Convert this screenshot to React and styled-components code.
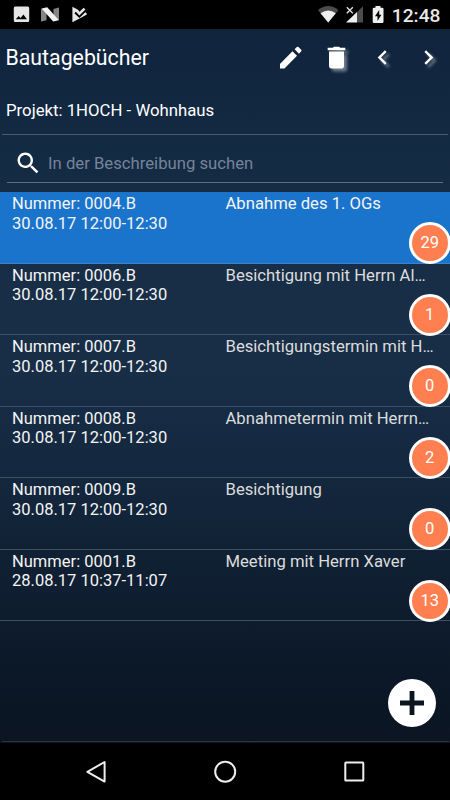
import React, { useState } from "react";
import styled, { createGlobalStyle } from "styled-components";

const entries = [
  { number: "0004.B", date: "30.08.17 12:00-12:30", text: "Abnahme des 1. OGs", count: 29 },
  { number: "0006.B", date: "30.08.17 12:00-12:30", text: "Besichtigung mit Herrn Al…", count: 1 },
  { number: "0007.B", date: "30.08.17 12:00-12:30", text: "Besichtigungstermin mit H…", count: 0 },
  { number: "0008.B", date: "30.08.17 12:00-12:30", text: "Abnahmetermin mit Herrn…", count: 2 },
  { number: "0009.B", date: "30.08.17 12:00-12:30", text: "Besichtigung", count: 0 },
  { number: "0001.B", date: "28.08.17 10:37-11:07", text: "Meeting mit Herrn Xaver", count: 13 },
];

const StatusIcons = () => (
  <>
    <svg width="80" height="18" viewBox="0 0 80 18">
      <path
        fill="#e6e6e6"
        fillRule="evenodd"
        d="M2.3 .5H14.7Q16.2 .5 16.2 2V14.5Q16.2 16 14.7 16H2.3Q.8 16 .8 14.5V2Q.8 .5 2.3 .5ZM2.8 13.2H14L10.4 8.6L7.6 12L5.7 9.9Z"
      />
      <path fill="#858585" d="M28 2.6L33.5 5V14.2L28 15.6ZM40.5 3L46 1.4V14L40.5 12Z" />
      <path fill="#f2f2f2" d="M28.6 2.4L34.2 1.2L46 14.2L40.2 15.6Z" />
      <path
        fill="#e6e6e6"
        d="M59.4 .8L65 3.8L66.6 5.8L70.6 1.8L72.4 3.4L66.4 9.4L62.8 5.8L61.4 7.2L66.4 12L72.2 6.2L73.8 7.4V8.4L68 11.8L59.4 16.2Z"
      />
    </svg>
    <svg width="66" height="18" viewBox="0 0 66 18">
      <path fill="#4c4c4c" d="M0 4.2Q10.2 -4 20.4 4.2L10.2 16.5Z" />
      <path fill="#efefef" d="M2.6 7.2Q10.2 1.6 17.8 7.2L10.2 16.5Z" />
      <path fill="#4c4c4c" d="M45 .2V16.5H39V6Z" />
      <path fill="#efefef" d="M39 6V16.5H28Z" />
      <path stroke="#dedede" strokeWidth="1.4" d="M28.8 1.2L34.8 7.2M34.8 1.2L28.8 7.2" />
      <path
        fill="#efefef"
        fillRule="evenodd"
        d="M57.5 0H62.5V1.7H64.2Q65.5 1.7 65.5 3V15.7Q65.5 17 64.2 17H56Q54.7 17 54.7 15.7V3Q54.7 1.7 56 1.7H57.5ZM61.2 4L57 10.2H59.5V15L63.4 8.8H61.2Z"
      />
    </svg>
  </>
);

const Icon = ({ size = 29, d }) => (
  <svg width={size} height={size} viewBox="0 0 24 24" fill="#fff">
    <path d={d} />
  </svg>
);

const App = () => {
  const [selected, setSelected] = useState(0);
  const [search, setSearch] = useState("");

  return (
    <>
      <GlobalStyle />
      <Screen>
        <StatusBar>
          <StatusIcons />
          <Clock>12:48</Clock>
        </StatusBar>
        <Content>
          <Header>
            <Title>Bautagebücher</Title>
            <IconButton>
              <Icon d="M3.3 17.3V21H7L17.4 10.6l-3.8-3.8L3.3 17.3zM20.9 6.9a1 1 0 0 0 0-1.3l-2.3-2.3a1 1 0 0 0-1.3 0l-1.9 1.9 3.6 3.6 1.9-1.9z" />
            </IconButton>
            <IconButton $shadow>
              <Icon d="M5.8 19.3c0 1 .8 1.8 1.8 1.8h8.8c1 0 1.8-.8 1.8-1.8V7H5.8v12.3zM19.3 4h-4.2l-1-1H9.9l-1 1H4.7v2h14.6V4z" />
            </IconButton>
            <IconButton $shadow>
              <Icon d="M15.41 7.41L14 6l-6 6 6 6 1.41-1.41L10.83 12z" />
            </IconButton>
            <IconButton $shadow>
              <Icon d="M10 6L8.59 7.41 13.17 12l-4.58 4.59L10 18l6-6z" />
            </IconButton>
          </Header>
          <Project>Projekt: 1HOCH - Wohnhaus</Project>
          <SearchBox>
            <Icon
              size={28.5}
              d="M15.5 14h-.79l-.28-.27C15.41 12.59 16 11.11 16 9.5 16 5.91 13.09 3 9.5 3S3 5.91 3 9.5 5.91 16 9.5 16c1.61 0 3.09-.59 4.23-1.57l.27.28v.79l5 4.99L20.49 19l-4.99-5zm-6 0C7.01 14 5 11.99 5 9.5S7.01 5 9.5 5 14 7.01 14 9.5 11.99 14 9.5 14z"
            />
            <SearchInput
              placeholder="In der Beschreibung suchen"
              value={search}
              onChange={(e) => setSearch(e.target.value)}
            />
          </SearchBox>
          <List>
            {entries.map((entry, i) => (
              <Row key={entry.number} $active={i === selected} onClick={() => setSelected(i)}>
                <Info>
                  Nummer: {entry.number}
                  <br />
                  {entry.date}
                </Info>
                <Description $active={i === selected}>{entry.text}</Description>
                <Badge>{entry.count}</Badge>
              </Row>
            ))}
          </List>
          <Footer>
            <AddButton>
              <svg width="24" height="24" viewBox="0 0 24 24">
                <path fill="#0b1421" d="M9.6 0h4.8v9.6H24v4.8h-9.6V24H9.6v-9.6H0V9.6h9.6z" />
              </svg>
            </AddButton>
          </Footer>
        </Content>
        <NavBar>
          <svg width="22" height="24" viewBox="0 0 22 24">
            <path d="M19.6 2V21.6L2.4 11.8Z" />
          </svg>
          <svg width="24" height="24" viewBox="0 0 24 24">
            <circle cx="12.2" cy="11.7" r="10" />
          </svg>
          <svg width="22" height="24" viewBox="0 0 22 24">
            <rect x="2.3" y="2.6" width="18" height="18" rx="0.6" />
          </svg>
        </NavBar>
      </Screen>
    </>
  );
};

export default App;

const GlobalStyle = createGlobalStyle`
  * {
    box-sizing: border-box;
  }
  body {
    margin: 0;
    background: #000;
    font-family: Roboto, "Liberation Sans", sans-serif;
  }
  svg {
    display: block;
    flex-shrink: 0;
  }
`;
const Screen = styled.div`
  display: flex;
  flex-direction: column;
  width: 450px;
  height: 800px;
  overflow: hidden;
  background: #000;
`;
const StatusBar = styled.div`
  display: flex;
  justify-content: space-between;
  height: 29px;
  padding: 6px 9.5px 0 13px;
  svg + svg {
    margin-left: auto;
  }
`;
const Clock = styled.span`
  margin-left: 7.5px;
  color: #e8e8e8;
  font-size: 19.2px;
  font-weight: 500;
  line-height: 19px;
`;
const Content = styled.div`
  display: flex;
  flex-direction: column;
  height: 714px;
  background: linear-gradient(
    #10243c 0%,
    #132a43 16%,
    #182e46 34%,
    #182e47 48%,
    #142940 60%,
    #102033 75%,
    #0c1929 88%,
    #0b1522 100%
  );
`;
const Header = styled.div`
  display: flex;
  align-items: center;
  gap: 17px;
  height: 56px;
  padding: 0 7.5px 0 5.5px;
`;
const Title = styled.h1`
  flex: 1;
  margin: 0;
  color: #fff;
  font-size: 21.3px;
  font-weight: 400;
`;
const IconButton = styled.button`
  padding: 0;
  border: 0;
  background: none;
  filter: ${(p) => (p.$shadow ? "drop-shadow(3px 3px 1.5px rgba(255, 255, 255, 0.4))" : "none")};
`;
const Project = styled.div`
  height: 50px;
  margin: 0 2px;
  padding-left: 4px;
  border-bottom: 1px solid #4b5b69;
  color: #fff;
  font-size: 16.75px;
  line-height: 50px;
`;
const SearchBox = styled.div`
  display: flex;
  align-items: center;
  height: 48px;
  margin: 0 7px 9px;
  padding: 9px 0 0 7px;
  border-bottom: 1px solid #5f6f7e;
`;
const SearchInput = styled.input`
  flex: 1;
  margin-left: 5.5px;
  padding: 0;
  border: 0;
  outline: 0;
  background: none;
  color: #fff;
  font: 16.7px Roboto, "Liberation Sans", sans-serif;
  &::placeholder {
    color: #75849a;
  }
`;
const List = styled.div`
  flex: 1;
`;
const Row = styled.div`
  display: flex;
  position: relative;
  height: 71.5px;
  padding: 2px 0 0 12px;
  border-bottom: 1px solid ${(p) => (p.$active ? "#3a82cb" : "#3d5063")};
  background: ${(p) => (p.$active ? "#1a74cc" : "transparent")};
  line-height: 19.5px;
`;
const Info = styled.div`
  width: 213.5px;
  color: #f4f4f4;
  font-size: 16.5px;
`;
const Description = styled.div`
  color: ${(p) => (p.$active ? "#f4f4f4" : "#dcdcdc")};
  font-size: 16.67px;
  white-space: nowrap;
`;
const Badge = styled.span`
  position: absolute;
  right: -0.7px;
  bottom: -1.7px;
  display: flex;
  align-items: center;
  justify-content: center;
  width: 42px;
  height: 42px;
  border: 3px solid #fff;
  border-radius: 50%;
  background: #ff7f50;
  color: #fff;
  font-size: 16.5px;
`;
const Footer = styled.div`
  display: flex;
  justify-content: flex-end;
  margin: 0 1px 1px 2px;
  padding: 0 13px 14px 0;
  border-bottom: 1px solid #2b3644;
`;
const AddButton = styled.button`
  display: flex;
  align-items: center;
  justify-content: center;
  width: 48px;
  height: 48px;
  padding: 0;
  border: 0;
  border-radius: 50%;
  background: #fff;
`;
const NavBar = styled.div`
  display: flex;
  align-items: center;
  justify-content: space-between;
  height: 57px;
  padding: 0 85px;
  svg {
    fill: none;
    stroke: #eee;
    stroke-width: 2;
    stroke-linejoin: round;
  }
`;
